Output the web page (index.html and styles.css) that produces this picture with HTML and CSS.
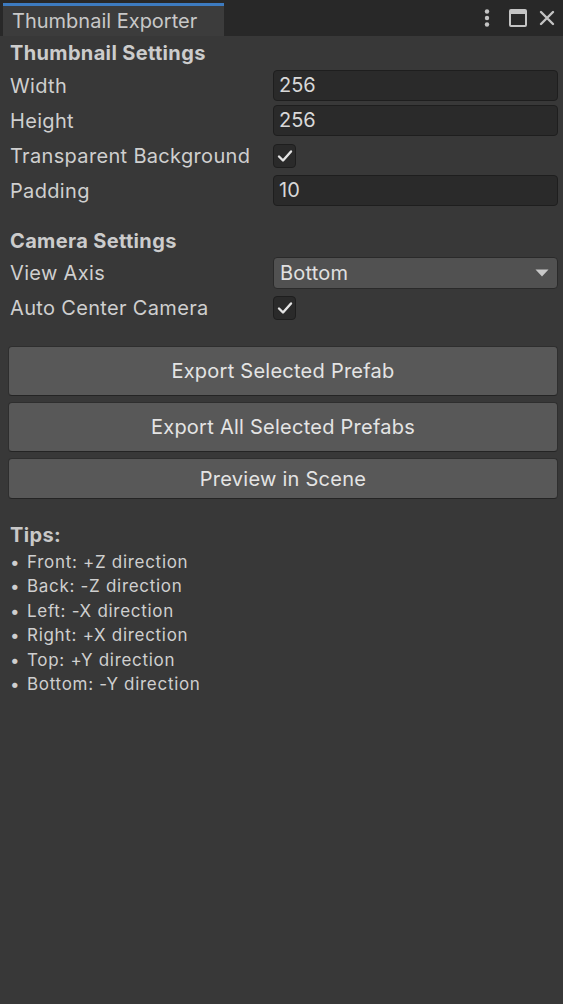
FILE: index.html
```html
<!DOCTYPE html>
<html>
<head>
<meta charset="utf-8">
<link rel="stylesheet" href="styles.css">
</head>
<body>
<div class="window">
  <div class="tabbar">
    <div class="tab"><span class="tab-title">Thumbnail Exporter</span></div>
    <div class="tab-icons">
      <svg class="ic-kebab" width="8" height="18" viewBox="0 0 8 18"><circle cx="4" cy="2.5" r="2.2" fill="#c4c4c4"/><circle cx="4" cy="9" r="2.2" fill="#c4c4c4"/><circle cx="4" cy="15.5" r="2.2" fill="#c4c4c4"/></svg>
      <svg class="ic-max" width="18" height="18" viewBox="0 0 18 18"><rect x="1" y="1" width="16" height="16" rx="1" fill="none" stroke="#c4c4c4" stroke-width="2"/><rect x="1" y="1" width="16" height="4" fill="#c4c4c4"/></svg>
      <svg class="ic-close" width="16" height="16" viewBox="0 0 16 16"><path d="M2 2 L14 14 M14 2 L2 14" stroke="#c4c4c4" stroke-width="2.4" stroke-linecap="round"/></svg>
    </div>
  </div>
  <div class="content">
    <div class="section-title">Thumbnail Settings</div>
    <div class="row"><span class="label">Width</span><div class="field">256</div></div>
    <div class="row"><span class="label">Height</span><div class="field">256</div></div>
    <div class="row"><span class="label">Transparent Background</span><div class="check"><svg width="16" height="14" viewBox="0 0 16 14"><path d="M2 7.5 L6 11.5 L14 2.5" fill="none" stroke="#e4e4e4" stroke-width="2.4" stroke-linecap="round" stroke-linejoin="round"/></svg></div></div>
    <div class="row"><span class="label">Padding</span><div class="field">10</div></div>

    <div class="section-title second">Camera Settings</div>
    <div class="row row-drop"><span class="label">View Axis</span><div class="dropdown"><span>Bottom</span><svg width="14" height="8" viewBox="0 0 14 8"><path d="M0.5 0.5 L13.5 0.5 L7 7.5 Z" fill="#c8c8c8"/></svg></div></div>
    <div class="row"><span class="label">Auto Center Camera</span><div class="check"><svg width="16" height="14" viewBox="0 0 16 14"><path d="M2 7.5 L6 11.5 L14 2.5" fill="none" stroke="#e4e4e4" stroke-width="2.4" stroke-linecap="round" stroke-linejoin="round"/></svg></div></div>

    <div class="buttons">
      <div class="btn btn-tall">Export Selected Prefab</div>
      <div class="btn btn-tall">Export All Selected Prefabs</div>
      <div class="btn btn-short">Preview in Scene</div>
    </div>

    <div class="tips">
      <div class="tips-title">Tips:</div>
      <div class="tip"><span class="dot">•</span>Front: +Z direction</div>
      <div class="tip"><span class="dot">•</span>Back: -Z direction</div>
      <div class="tip"><span class="dot">•</span>Left: -X direction</div>
      <div class="tip"><span class="dot">•</span>Right: +X direction</div>
      <div class="tip"><span class="dot">•</span>Top: +Y direction</div>
      <div class="tip"><span class="dot">•</span>Bottom: -Y direction</div>
    </div>
  </div>
</div>
</body>
</html>
```
FILE: styles.css
```css
html, body {
  margin: 0;
  padding: 0;
  background: #383838;
}
body {
  width: 563px;
  height: 1004px;
  overflow: hidden;
  font-family: Inter, "Noto Sans", sans-serif;
  color: #d2d2d2;
}
.window {
  display: flex;
  flex-direction: column;
  height: 1004px;
}
.tabbar {
  height: 36px;
  background: #282828;
  display: flex;
  align-items: stretch;
  box-sizing: border-box;
  padding-top: 3px;
}
.tab {
  margin-left: 3px;
  width: 221px;
  background: #3c3c3c;
  border-top: 3px solid #3d7bc0;
  box-sizing: border-box;
  display: flex;
  align-items: center;
  padding-left: 9px;
}
.tab-title {
  font-size: 20px;
  color: #c8c8c8;
  padding-bottom: 1px;
}
.tab-icons {
  margin-left: auto;
  display: flex;
  align-items: center;
  padding-right: 8px;
  padding-bottom: 3px;
}
.ic-kebab { margin-right: 18px; }
.ic-max { margin-right: 12px; }
.content {
  flex: 1;
  background: #383838;
  padding: 0 5px 0 10px;
}
.section-title {
  height: 32px;
  line-height: 34px;
  font-size: 20px;
  font-weight: 700;
  letter-spacing: 0.35px;
  color: #cccccc;
}
.section-title.second {
  margin-top: 16px;
}
.row {
  height: 35px;
  display: flex;
  align-items: center;
}
.row-drop { height: 34px; }
.label {
  width: 263px;
  font-size: 20px;
  letter-spacing: 0.33px;
  color: #cfcfcf;
  flex: none;
}
.field {
  flex: 1;
  height: 31px;
  box-sizing: border-box;
  background: #2a2a2a;
  border: 1px solid #1e1e1e;
  border-radius: 4px;
  font-size: 20px;
  line-height: 29px;
  padding-left: 5px;
  color: #d8d8d8;
}
.check {
  width: 23px;
  height: 24px;
  box-sizing: border-box;
  background: #2a2a2a;
  border: 1px solid #1e1e1e;
  border-radius: 4px;
  display: flex;
  align-items: center;
  justify-content: center;
}
.dropdown {
  flex: 1;
  height: 32px;
  box-sizing: border-box;
  background: #515151;
  border: 1px solid #2a2a2a;
  border-radius: 4px;
  display: flex;
  align-items: center;
  justify-content: space-between;
  padding: 0 8px 0 6px;
  font-size: 20px;
  letter-spacing: 0.2px;
  color: #e0e0e0;
}
.buttons {
  margin: 21px 0 0 -2px;
  display: flex;
  flex-direction: column;
  gap: 6px;
}
.btn {
  box-sizing: border-box;
  background: #585858;
  border: 1px solid #2e2e2e;
  border-bottom-color: #242424;
  border-radius: 4px;
  display: flex;
  align-items: center;
  justify-content: center;
  font-size: 20px;
  letter-spacing: 0.25px;
  color: #e4e4e4;
}
.btn-tall { height: 50px; }
.btn-short { height: 41px; }
.tips {
  margin-top: 23px;
}
.tips-title {
  font-size: 20px;
  font-weight: 700;
  letter-spacing: 0.35px;
  color: #c8c8c8;
  height: 28px;
  line-height: 26px;
}
.tip {
  font-size: 17px;
  letter-spacing: 0.7px;
  color: #cfcfcf;
  height: 24.4px;
  line-height: 24.4px;
  display: flex;
}
.dot {
  width: 17px;
  letter-spacing: 0;
  flex: none;
}
```
